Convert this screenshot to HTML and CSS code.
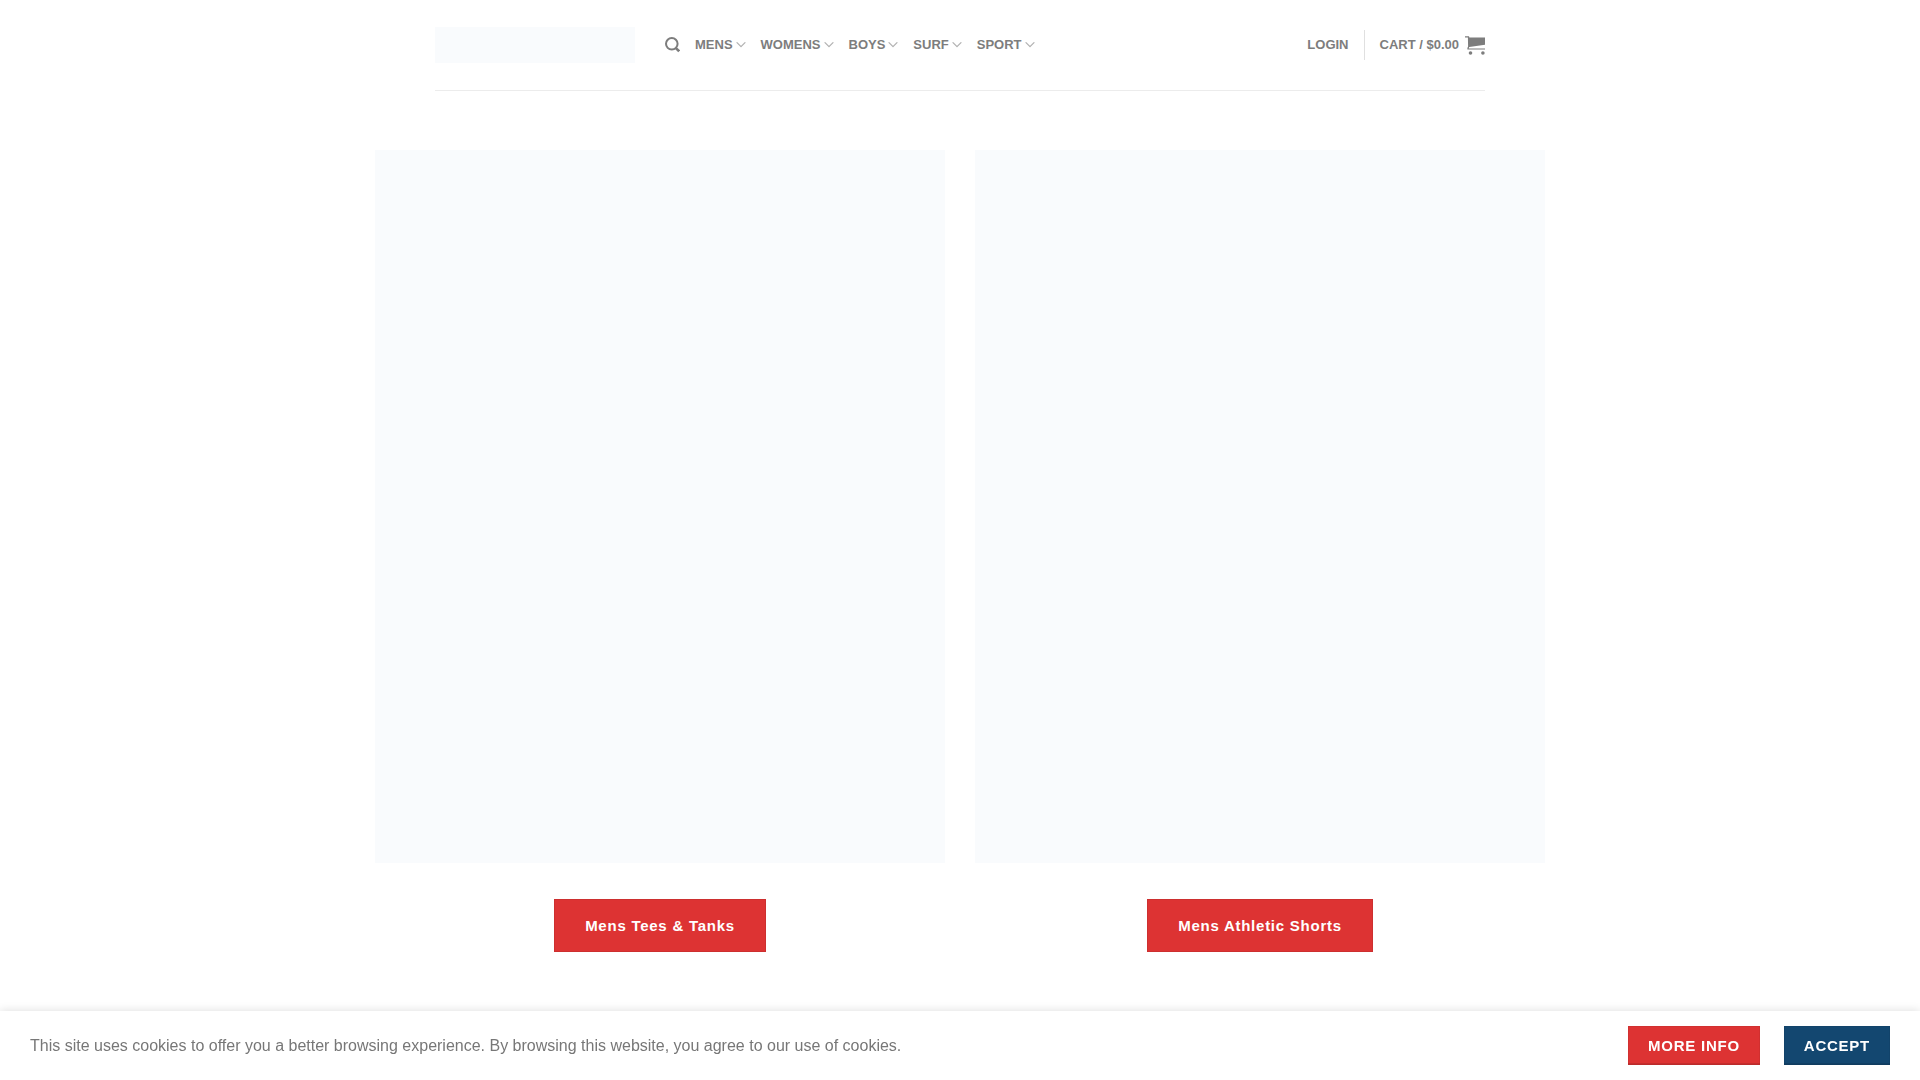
FILE: index.html
```html
<!DOCTYPE html>
<html lang="en">
<head>
<meta charset="utf-8">
<meta name="viewport" content="width=device-width, initial-scale=1">
<title>Shop</title>
<link rel="stylesheet" href="styles.css">
</head>
<body>
<svg class="sprite" aria-hidden="true">
  <symbol id="chevron" viewBox="0 0 10 10"><path d="M1 2.6 5 6.6 9 2.6" fill="none" stroke="currentColor" stroke-width="1.2" stroke-linecap="round" stroke-linejoin="round"/></symbol>
</svg>
<header class="header">
  <a class="logo" href="#" aria-label="Home"></a>
  <nav class="nav" aria-label="Main">
    <a class="nav-link" href="#" aria-label="Search">
      <svg class="icon-search" viewBox="0 0 15 17"><circle cx="6.8" cy="6.8" r="5.8" fill="none" stroke="currentColor" stroke-width="2"/><path d="M10.4 10.6 14.2 14.4" stroke="currentColor" stroke-width="2.6"/></svg>
    </a>
    <a class="nav-link" href="#">MENS<svg class="chevron"><use href="#chevron"/></svg></a>
    <a class="nav-link" href="#">WOMENS<svg class="chevron"><use href="#chevron"/></svg></a>
    <a class="nav-link" href="#">BOYS<svg class="chevron"><use href="#chevron"/></svg></a>
    <a class="nav-link" href="#">SURF<svg class="chevron"><use href="#chevron"/></svg></a>
    <a class="nav-link" href="#">SPORT<svg class="chevron"><use href="#chevron"/></svg></a>
  </nav>
  <div class="nav account">
    <a class="nav-link" href="#">LOGIN</a>
    <span class="divider"></span>
    <a class="nav-link cart" href="#">CART / $0.00
      <svg class="icon-cart" viewBox="0 0 20 20"><path d="M0 1.2h4l.4 1.2H20v7.4L4.2 11.9l-.5 1.5H20v1.2H2.4v-1.6l.7-1.6L2.9 2.4H0z" fill="currentColor"/><circle cx="5.5" cy="18" r="1.8" fill="currentColor"/><circle cx="17.9" cy="18" r="1.8" fill="currentColor"/></svg>
    </a>
  </div>
</header>
<main class="categories">
  <section class="category">
    <div class="picture"></div>
    <a class="button button-large" href="#">Mens Tees &amp; Tanks</a>
  </section>
  <section class="category">
    <div class="picture"></div>
    <a class="button button-large" href="#">Mens Athletic Shorts</a>
  </section>
</main>
<aside class="cookies" aria-label="Cookie notice">
  <p class="cookies-text">This site uses cookies to offer you a better browsing experience. By browsing this website, you agree to our use of cookies.</p>
  <div class="cookies-actions">
    <a class="button button-raised" href="#">MORE INFO</a>
    <button class="button button-raised button-accept" type="button">ACCEPT</button>
  </div>
</aside>
</body>
</html>
```
FILE: styles.css
```css
* { box-sizing: border-box; }

body {
  margin: 0;
  background: #fff;
  color: #777;
  font: 16px/24px "Liberation Sans", Arial, sans-serif;
}

a { color: inherit; text-decoration: none; }
svg { display: block; flex: none; }
.sprite { display: none; }

.header {
  display: flex;
  align-items: center;
  gap: 30px;
  max-width: 1050px;
  min-height: 91px;
  margin: 0 auto;
  border-bottom: 1px solid #ececec;
}

.logo { width: 200px; height: 36px; background: #f9fbfd; }

.nav { display: flex; align-items: center; gap: 15px; }

.nav-link {
  display: flex;
  align-items: center;
  gap: 3px;
  color: #7d7d7d;
  font-size: 13px;
  line-height: 16px;
  font-weight: 700;
}

.icon-search { width: 15px; height: 17px; }
.chevron { width: 10px; height: 10px; opacity: .6; }
.account { margin-left: auto; }
.divider { width: 1px; height: 30px; background: #e0e0e0; }
.cart { gap: 6px; }
.icon-cart { width: 20px; height: 20px; }

.categories {
  display: grid;
  grid-template-columns: repeat(2, 1fr);
  gap: 30px;
  max-width: 1200px;
  margin: 0 auto;
  padding: 59px 15px;
}

.category {
  display: flex;
  flex-direction: column;
  align-items: center;
  gap: 36px;
}

.picture { width: 100%; aspect-ratio: 4 / 5; background: #f9fbfd; }

.button {
  padding: 0 20px;
  border: 0;
  background: #dd3333;
  color: #fff;
  font: 700 15px/39px "Liberation Sans", Arial, sans-serif;
  letter-spacing: .05em;
  white-space: nowrap;
  cursor: pointer;
}

.button-large {
  padding: 0 31px;
  line-height: 53px;
  box-shadow: inset 0 0 0 1px rgba(0, 0, 0, .07);
}

.button-raised {
  box-shadow: inset 0 -2px 0 rgba(0, 0, 0, .1), inset 0 0 0 1px rgba(0, 0, 0, .05);
}

.button-accept { background: #134770; }

.cookies {
  position: fixed;
  right: 0;
  bottom: 0;
  left: 0;
  display: flex;
  align-items: center;
  justify-content: space-between;
  gap: 30px;
  padding: 15px 30px;
  background: #fff;
  box-shadow: 0 0 9px rgba(0, 0, 0, .14);
}

.cookies-text { margin: 0; }
.cookies-actions { display: flex; gap: 24px; }
```
